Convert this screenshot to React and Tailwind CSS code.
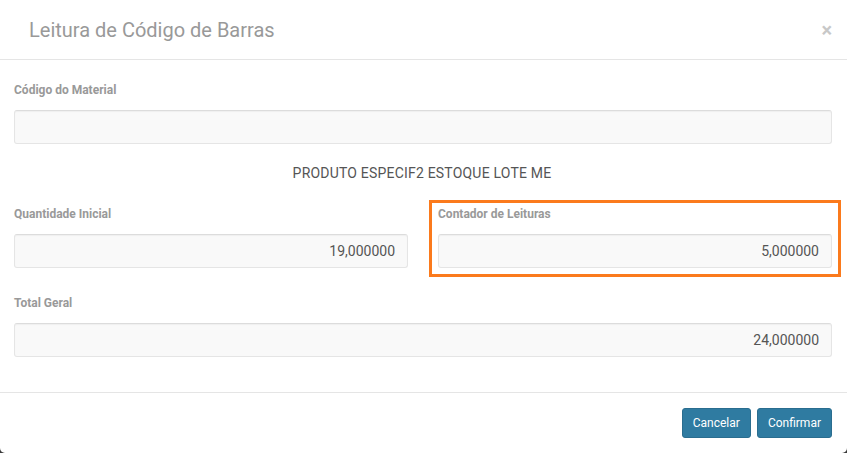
const font = { fontFamily: 'Roboto, "Liberation Sans", sans-serif' }

function Field({ label, value, className = '' }) {
  return (
    <div className={className}>
      <label className="block text-[12px] font-bold text-[#999] leading-[16px] mb-[12px]">{label}</label>
      <div className="h-[34px] bg-[#f9f9f9] border border-[#e5e5e5] border-t-[#dcdcdc] rounded-[3px] shadow-[inset_0_1px_1px_rgba(0,0,0,0.04)] px-[12px] flex items-center justify-end text-[14px] text-[#555]">
        {value}
      </div>
    </div>
  )
}

export default function App() {
  return (
    <div className="w-[847px] h-[453px] bg-[#3a3a3a] overflow-hidden" style={font}>
      <div className="w-[847px] h-[453px] bg-white rounded-b-[5px] flex flex-col">
        <div className="h-[60px] border-b border-[#e5e5e5] flex items-center justify-between pl-[29px] pr-[15px] shrink-0">
          <h4 className="text-[20px] text-[#999] font-normal">Leitura de Código de Barras</h4>
          <span className="text-[20px] font-bold text-[#c8c8c8] leading-none">×</span>
        </div>
        <div className="px-[14px] pt-[22px] h-[333px] border-b border-[#e5e5e5] shrink-0">
          <Field label="Código do Material" value="" className="mr-[1px]" />
          <div className="text-center text-[14px] text-[#555] tracking-[0.2px] mt-[21px] mb-[24px] leading-[17px] pr-[3px]">PRODUTO ESPECIF2 ESTOQUE LOTE ME</div>
          <div className="flex gap-[30px] mr-[1px]">
            <Field label="Quantidade Inicial" value="19,000000" className="flex-1" />
            <div className="flex-1 relative">
              <div className="absolute -left-[9px] -right-[9px] -top-[6px] -bottom-[9px] border-[3px] border-[#fb7a1c] pointer-events-none" />
              <Field label="Contador de Leituras" value="5,000000" />
            </div>
          </div>
          <Field label="Total Geral" value="24,000000" className="mt-[27px] mr-[1px]" />
        </div>
        <div className="flex justify-end gap-[6px] pr-[15px] pt-[15px]">
          <button className="h-[30px] px-[10px] bg-[#2f7ba1] border border-[#2a6d8f] rounded-[3px] text-white text-[12px]">Cancelar</button>
          <button className="h-[30px] px-[10px] bg-[#2f7ba1] border border-[#2a6d8f] rounded-[3px] text-white text-[12px]">Confirmar</button>
        </div>
      </div>
    </div>
  )
}
